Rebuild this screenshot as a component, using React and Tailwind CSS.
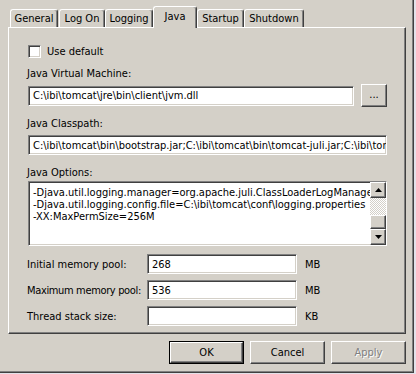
import React from "react";

const sunken =
  "bg-white border border-t-[#808080] border-l-[#808080] border-b-white border-r-white shadow-[inset_1px_1px_0_#404040,inset_-1px_-1px_0_#d4d0c8]";
const raised =
  "bg-[#d4d0c8] border border-t-white border-l-white border-b-[#404040] border-r-[#404040] shadow-[inset_-1px_-1px_0_#808080]";

function Tab({ label, w, selected }) {
  if (selected) {
    return (
      <div
        className={`relative z-10 -mb-px h-[22px] flex items-center justify-center bg-[#d4d0c8] border-l border-t border-white border-r border-r-[#404040] rounded-t-[3px] shadow-[inset_-1px_0_0_#808080] whitespace-nowrap`}
        style={{ width: w }}
      >
        <span className="-mt-[2px]">{label}</span>
      </div>
    );
  }
  return (
    <div
      className={`h-[18px] flex items-center justify-center bg-[#d4d0c8] border-l border-t border-white border-r border-r-[#404040] rounded-t-[3px] shadow-[inset_-1px_0_0_#808080] whitespace-nowrap`}
      style={{ width: w }}
    >
      {label}
    </div>
  );
}

function Arrow({ up }) {
  return (
    <svg width="7" height="4" viewBox="0 0 7 4">
      {up ? (
        <polygon points="3.5,0 7,4 0,4" fill="#000" />
      ) : (
        <polygon points="0,0 7,0 3.5,4" fill="#000" />
      )}
    </svg>
  );
}

function Field({ children, className = "" }) {
  return (
    <div className={`${sunken} h-[20px] flex items-center pl-[4px] overflow-hidden whitespace-nowrap ${className}`}>
      {children}
    </div>
  );
}

export default function App() {
  return (
    <div className="w-[416px] h-[374px] bg-[#e4e2ea] overflow-hidden font-['DejaVu_Sans_Condensed','DejaVu_Sans',sans-serif] text-[11px] text-black leading-[13px]">
      <div className="w-[414px] h-[373px] bg-[#d4d0c8] border-r border-b border-[#404040] shadow-[inset_-1px_-1px_0_#808080] pl-[8px] pt-[6px] flex flex-col">
        {/* tabs */}
        <div className="flex items-end h-[21px] pl-[2px]">
          <Tab label="General" w={48} />
          <div className="w-[1px]" />
          <Tab label="Log On" w={46} />
          <Tab label="Logging" w={48} />
          <Tab label="Java" w={44} selected />
          <Tab label="Startup" w={47} />
          <Tab label="Shutdown" w={60} />
        </div>

        {/* panel */}
        <div className="w-[398px] h-[307px] border-l border-t border-white border-r border-b border-r-[#404040] border-b-[#404040] shadow-[inset_-1px_-1px_0_#808080] pl-[19px] flex flex-col">
          <div className="flex items-center h-[13px] mt-[17px]">
            <div className={`${sunken} w-[13px] h-[13px]`} />
            <span className="ml-[6px]">Use default</span>
          </div>

          <div className="mt-[9px] -ml-px">Java Virtual Machine:</div>
          <div className="flex items-center h-[23px] mt-[4px]">
            <Field className="w-[326px]">C:\ibi\tomcat\jre\bin\client\jvm.dll</Field>
            <div className={`${raised} ml-[7px] w-[26px] h-[23px] flex items-center justify-center`}>
              <span className="-mt-[2px]">...</span>
            </div>
          </div>

          <div className="mt-[10px] -ml-px">Java Classpath:</div>
          <Field className="w-[359px] mt-[5px]">
            C:\ibi\tomcat\bin\bootstrap.jar;C:\ibi\tomcat\bin\tomcat-juli.jar;C:\ibi\tomcat\lib
          </Field>

          <div className="mt-[11px] -ml-px">Java Options:</div>
          <div className={`${sunken} w-[359px] h-[65px] mt-[2px] flex`}>
            <div className="flex-1 overflow-hidden whitespace-nowrap pl-[4px] pt-[5px] leading-[12px]">
              <div>-Djava.util.logging.manager=org.apache.juli.ClassLoaderLogManager</div>
              <div>-Djava.util.logging.config.file=C:\ibi\tomcat\conf\logging.properties</div>
              <div>-XX:MaxPermSize=256M</div>
            </div>
            <div className="w-[16px] flex flex-col">
              <div className={`${raised} h-[16px] flex items-center justify-center`}>
                <Arrow up />
              </div>
              <div className="flex-1 flex flex-col justify-end bg-[repeating-conic-gradient(#ffffff_0_25%,#d4d0c8_0_50%)] bg-[length:2px_2px]">
                <div className={`${raised} h-[14px]`} />
              </div>
              <div className={`${raised} h-[16px] flex items-center justify-center`}>
                <Arrow />
              </div>
            </div>
          </div>

          <div className="flex items-center h-[20px] mt-[8px]">
            <div className="w-[119px] shrink-0 whitespace-nowrap -ml-px">Initial memory pool:</div>
            <Field className="w-[150px] ml-px">268</Field>
            <span className="ml-[8px]">MB</span>
          </div>
          <div className="flex items-center h-[20px] mt-[6px]">
            <div className="w-[119px] shrink-0 whitespace-nowrap -ml-px tracking-[-0.35px]">Maximum memory pool:</div>
            <Field className="w-[150px] ml-px">536</Field>
            <span className="ml-[8px]">MB</span>
          </div>
          <div className="flex items-center h-[20px] mt-[6px]">
            <div className="w-[119px] shrink-0 whitespace-nowrap -ml-px">Thread stack size:</div>
            <Field className="w-[150px] ml-px"></Field>
            <span className="ml-[8px]">KB</span>
          </div>
        </div>

        {/* buttons */}
        <div className="w-[398px] flex justify-end gap-[6px] mt-[7px]">
          <div className="w-[75px] h-[23px] border border-black">
            <div className={`${raised} w-full h-full flex items-center justify-center`}>OK</div>
          </div>
          <div className={`${raised} w-[75px] h-[23px] flex items-center justify-center`}>Cancel</div>
          <div className={`${raised} w-[75px] h-[23px] flex items-center justify-center text-[#808080] [text-shadow:1px_1px_0_#ffffff]`}>
            Apply
          </div>
        </div>
      </div>
    </div>
  );
}
